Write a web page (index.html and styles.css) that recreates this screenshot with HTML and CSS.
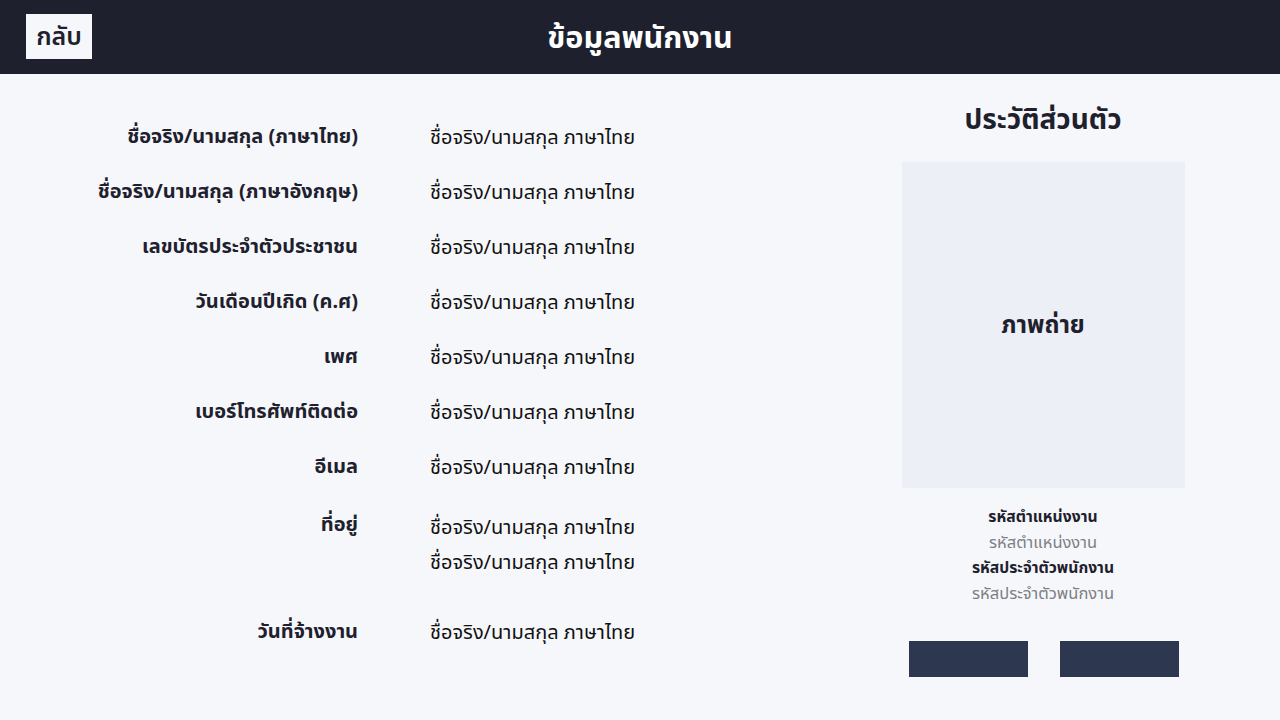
FILE: index.html
```html
<!DOCTYPE html>
<html lang="th">
<head>
<meta charset="utf-8">
<link rel="stylesheet" href="styles.css">
</head>
<body>
<header class="topbar">
  <button class="back">กลับ</button>
  <h1 class="title">ข้อมูลพนักงาน</h1>
</header>
<main class="content">
  <section class="details">
    <div class="row"><div class="label">ชื่อจริง/นามสกุล (ภาษาไทย)</div><div class="value">ชื่อจริง/นามสกุล ภาษาไทย</div></div>
    <div class="row"><div class="label">ชื่อจริง/นามสกุล (ภาษาอังกฤษ)</div><div class="value">ชื่อจริง/นามสกุล ภาษาไทย</div></div>
    <div class="row"><div class="label">เลขบัตรประจำตัวประชาชน</div><div class="value">ชื่อจริง/นามสกุล ภาษาไทย</div></div>
    <div class="row"><div class="label">วันเดือนปีเกิด (ค.ศ)</div><div class="value">ชื่อจริง/นามสกุล ภาษาไทย</div></div>
    <div class="row"><div class="label">เพศ</div><div class="value">ชื่อจริง/นามสกุล ภาษาไทย</div></div>
    <div class="row"><div class="label">เบอร์โทรศัพท์ติดต่อ</div><div class="value">ชื่อจริง/นามสกุล ภาษาไทย</div></div>
    <div class="row"><div class="label">อีเมล</div><div class="value">ชื่อจริง/นามสกุล ภาษาไทย</div></div>
    <div class="row row-tall"><div class="label">ที่อยู่</div><div class="value">ชื่อจริง/นามสกุล ภาษาไทย<br>ชื่อจริง/นามสกุล ภาษาไทย</div></div>
    <div class="row"><div class="label">วันที่จ้างงาน</div><div class="value">ชื่อจริง/นามสกุล ภาษาไทย</div></div>
  </section>
  <aside class="profile">
    <h2 class="profile-title">ประวัติส่วนตัว</h2>
    <div class="photo">ภาพถ่าย</div>
    <div class="codes">
      <div class="code-label">รหัสตำแหน่งงาน</div>
      <div class="code-value">รหัสตำแหน่งงาน</div>
      <div class="code-label">รหัสประจำตัวพนักงาน</div>
      <div class="code-value">รหัสประจำตัวพนักงาน</div>
    </div>
    <div class="actions">
      <button class="action"></button>
      <button class="action"></button>
    </div>
  </aside>
</main>
</body>
</html>
```
FILE: styles.css
```css
* { box-sizing: border-box; }
html, body { margin: 0; padding: 0; }
body {
  width: 1280px;
  height: 720px;
  background: #f6f7fb;
  font-family: "Noto Sans", "Noto Sans Thai", sans-serif;
  color: #1e212d;
  overflow: hidden;
}
.topbar {
  height: 74px;
  background: #1e212d;
  display: flex;
  align-items: center;
  justify-content: center;
  position: relative;
}
.back {
  position: absolute;
  left: 26px;
  top: 14px;
  width: 66px;
  height: 45px;
  border: none;
  background: #f6f7fb;
  color: #1e212d;
  font-family: inherit;
  font-size: 25px;
  font-weight: 600;
  padding: 0;
}
.title {
  margin: 2px 0 0;
  color: #ffffff;
  font-size: 30.5px;
  font-weight: 700;
}
.content {
  display: flex;
  padding-top: 20px;
}
.details {
  flex: 0 0 806px;
  display: flex;
  flex-direction: column;
  padding-top: 15px;
}
.row {
  display: flex;
  height: 55px;
  align-items: center;
}
.row-tall {
  height: 110px;
  align-items: flex-start;
  padding-top: 15px;
}
.label {
  width: 358px;
  text-align: right;
  font-size: 20px;
  font-weight: 700;
  color: #1e212d;
  padding-top: 1px;
}
.value {
  margin-left: 72px;
  font-size: 20px;
  color: #111;
  line-height: 35px;
}
.profile {
  flex: 1 1 auto;
  display: flex;
  flex-direction: column;
  align-items: center;
}
.profile-title {
  margin: 0;
  font-size: 28px;
  font-weight: 700;
  height: 48px;
  line-height: 48px;
}
.photo {
  margin-top: 20px;
  width: 283px;
  height: 326px;
  background: #eceff6;
  display: flex;
  align-items: center;
  justify-content: center;
  font-size: 24px;
  font-weight: 700;
}
.codes {
  margin-top: 16px;
  text-align: center;
  font-size: 15.7px;
  line-height: 25.3px;
}
.code-label { font-weight: 700; color: #1e212d; }
.code-value { color: #7d7f87; font-size: 16.5px; }
.actions {
  margin-top: 36px;
  padding-left: 2px;
  display: flex;
  gap: 32px;
}
.action {
  width: 119px;
  height: 36px;
  border: none;
  background: #2d3850;
  padding: 0;
}
```
